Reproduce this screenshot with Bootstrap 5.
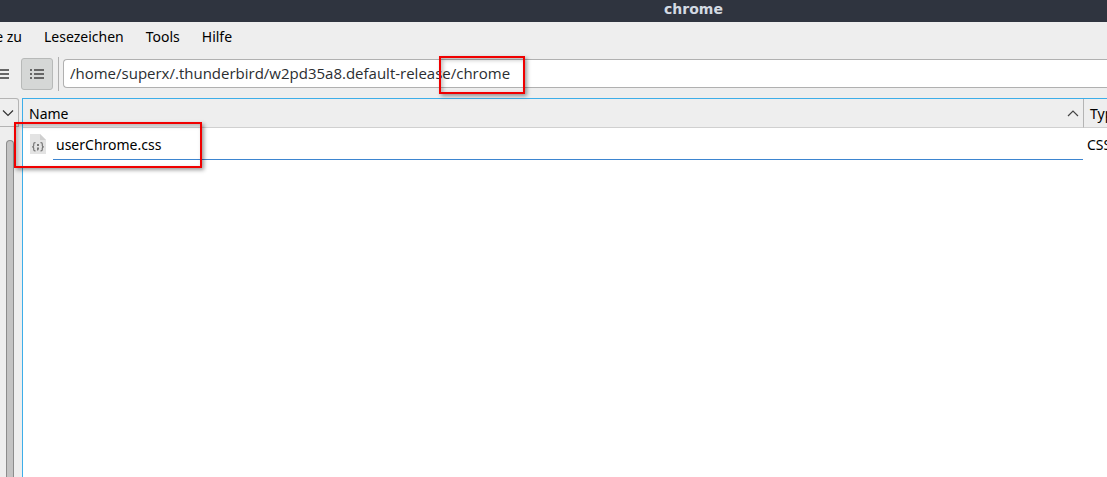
<!DOCTYPE html>
<html lang="de">
<head>
<meta charset="utf-8">
<meta name="viewport" content="width=device-width, initial-scale=1">
<title>chrome</title>
<link href="https://cdn.jsdelivr.net/npm/bootstrap@5.3.0/dist/css/bootstrap.min.css" rel="stylesheet">
<style>
body { background: #eeeeee; color: #111; font-family: "Noto Sans", "Open Sans", sans-serif; font-size: 14px; line-height: 20px; }
.titlebar { height: 22px; background: #2f343f; color: #d3dae3; padding-left: 280px; font: bold 14px/18px "DejaVu Sans", sans-serif; }
.menus { height: 30px; gap: 22px; }
.menus a { color: #000; text-decoration: none; white-space: nowrap; }
.menus .cut { width: 22px; display: flex; justify-content: flex-end; overflow: hidden; }
.tools { height: 46px; padding-bottom: 2px; }
.tool-btn { height: 32px; border: 1px solid transparent; border-radius: 3px; padding: 0; background: none; color: #666; display: flex; align-items: center; justify-content: center; }
.tool-plain { width: 21px; justify-content: flex-start; border: 0; }
.tool-on { width: 32px; background: #d5d7d6; border-color: #b7b9b8; }
.rule { width: 1px; height: 34px; background: #b0b0b0; margin: 0 4px 0 5px; }
.path-box { height: 30px; }
.path-input { height: 29px; border: 1px solid #b0b0b0; border-right: 0; border-radius: 4px 0 0 4px; background: #fff; color: #2b2e31; padding: 0 6px 2px; outline: 0; font: 15px "Open Sans", "Noto Sans", sans-serif; }
.side { width: 22px; }
.side-btn { width: 19px; height: 29px; border: 1px solid #b4b4b4; border-left: 0; border-radius: 0 3px 0 0; background: #eee; padding: 0; display: flex; align-items: center; justify-content: center; }
.thumb { width: 8px; margin: 13px 0 0 6px; background: #c3c3c3; border: 1px solid #8c8c8c; border-bottom: 0; border-radius: 4px 4px 0 0; }
.listing { background: #fff; border: solid #3daee9; border-width: 1px 0 0 1px; }
.files { table-layout: fixed; width: 100%; border-collapse: separate; border-spacing: 0; }
.files th { height: 29px; padding: 2px 6px 0; font-weight: 400; background: #eee; border-bottom: 1px solid #d0d0d0; color: #000; white-space: nowrap; }
.files th:first-child { padding-right: 4px; }
.files td { height: 32px; padding: 0; white-space: nowrap; }
.files .kind { width: 24px; overflow: hidden; }
.files th.kind { border-left: 1px solid #b4b4b4; }
.files td.kind { padding: 2px 0 0 4px; color: #000; }
.entry { height: 32px; color: #000; }
.entry-icon { width: 30px; padding-left: 7px; }
.entry-name { border-bottom: 1px solid #3d85d0; padding: 0 3px; line-height: 33px; }
.callout { position: absolute; border: 2px solid #f00000; box-shadow: 2px 2px 4px rgba(0,0,0,.4), inset 2px 2px 4px rgba(0,0,0,.25); pointer-events: none; z-index: 2; }
.callout-path { left: 376px; top: -3px; width: 86px; height: 38px; }
.callout-file { left: -9px; top: -6px; width: 188px; height: 46px; }
</style>
</head>
<body class="vh-100 d-flex flex-column overflow-hidden">
<header class="titlebar text-center">chrome</header>
<nav class="menus d-flex align-items-center" aria-label="Menü">
  <a class="cut" href="#">Gehe zu</a>
  <a href="#">Lesezeichen</a>
  <a href="#">Tools</a>
  <a href="#">Hilfe</a>
</nav>
<div class="tools d-flex align-items-center">
  <button class="tool-btn tool-plain" type="button" aria-label="Kompakt"><svg width="9" height="12" fill="#666"><path d="M0 1h9v2H0zM0 5h9v2H0zM0 9h9v2H0z"/></svg></button>
  <button class="tool-btn tool-on" type="button" aria-label="Details"><svg width="14" height="12" fill="#666"><path d="M0 1h2v2H0zM4 1h10v2H4zM0 5h2v2H0zM4 5h10v2H4zM0 9h2v2H0zM4 9h10v2H4z"/></svg></button>
  <span class="rule"></span>
  <div class="path-box flex-grow-1 position-relative">
    <input class="path-input w-100 d-block" type="text" aria-label="Pfad" value="/home/superx/.thunderbird/w2pd35a8.default-release/chrome">
    <span class="callout callout-path"></span>
  </div>
</div>
<main class="d-flex flex-grow-1">
  <aside class="side d-flex flex-column flex-shrink-0">
    <button class="side-btn" type="button" aria-label="Seitenleiste"><svg width="18" height="12" fill="none" stroke="#333" stroke-width="1.2"><path d="M3 3.500l5 5 5-5"/></svg></button>
    <div class="thumb flex-grow-1"></div>
  </aside>
  <section class="listing flex-grow-1">
    <table class="files">
      <thead><tr>
        <th scope="col"><div class="d-flex align-items-center justify-content-between">Name<svg width="12" height="10" fill="none" stroke="#444" stroke-width="1.2"><path d="M1 7l5-5 5 5"/></svg></div></th>
        <th class="kind" scope="col">Typ</th>
      </tr></thead>
      <tbody><tr>
        <td><div class="entry d-flex position-relative">
          <div class="entry-icon d-flex align-items-center"><svg width="16" height="20"><path fill="#e3e3e3" d="M0 0h10l6 6v14H0z"/><path fill="#cfcfcf" d="M10 0v6h6z"/><g fill="none" stroke="#777" stroke-width="1.2"><path d="M5.500 8.700h-.5q-1.300 0-1.300 1.300v1.500q0 1.300-1.500 1.300 1.500 0 1.500 1.300v1.500q0 1.300 1.300 1.300h.5M10.500 8.700h.5q1.300 0 1.300 1.300v1.500q0 1.300 1.500 1.300-1.500 0-1.500 1.300v1.500q0 1.300-1.300 1.300h-.5"/></g><path fill="#777" d="M7 10h2v2H7zM7 13.500h2v1.500l-1 1.500H7z"/></svg></div>
          <div class="entry-name flex-grow-1">userChrome.css</div>
          <span class="callout callout-file"></span>
        </div></td>
        <td class="kind">CSS-Stylesheet</td>
      </tr></tbody>
    </table>
  </section>
</main>
<script src="https://cdn.jsdelivr.net/npm/bootstrap@5.3.0/dist/js/bootstrap.bundle.min.js"></script>
</body>
</html>
